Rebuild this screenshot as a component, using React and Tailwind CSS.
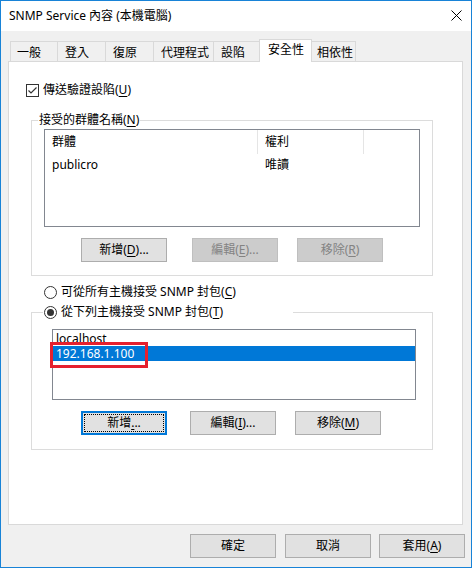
import React from "react";

const U = ({ children }) => (
  <span className="underline decoration-1 underline-offset-[2px]">{children}</span>
);

function Btn({ children, disabled, focused, className = "" }) {
  const base =
    "relative flex items-center justify-center w-[86px] h-[24px] text-[12px] leading-[16px] border shrink-0 ";
  let look = "bg-[#e1e1e1] border-[#adadad] text-black";
  if (disabled) look = "bg-[#cccccc] border-[#bfbfbf] text-[#838383]";
  if (focused) look = "bg-[#e1e1e1] border-2 border-[#0078d7] text-black";
  return (
    <div className={base + look + " " + className}>
      {focused && (
        <span className="absolute inset-[1px] border border-dotted border-black" />
      )}
      <span className="relative">{children}</span>
    </div>
  );
}

function Radio({ checked }) {
  return (
    <div className="w-[13px] h-[13px] rounded-full border border-[#333333] bg-white flex items-center justify-center shrink-0">
      {checked && <div className="w-[7px] h-[7px] rounded-full bg-[#333333]" />}
    </div>
  );
}

function Tab({ label, w, selected, cls = "" }) {
  if (selected) {
    return (
      <div
        className={
          "relative z-10 h-[23px] -mb-px bg-white border-l border-r border-t border-[#d9d9d9] pl-[8px] pt-[2px] leading-[16px] text-[12px] " +
          cls
        }
        style={{ width: w }}
      >
        {label}
      </div>
    );
  }
  return (
    <div
      className={
        "h-[20px] bg-[#f0f0f0] border-t border-[#d9d9d9] pt-[3px] leading-[16px] text-[12px] " +
        cls
      }
      style={{ width: w }}
    >
      {label}
    </div>
  );
}

export default function App() {
  return (
    <div className="w-[472px] h-[568px] border border-[#1883d7] bg-[#f0f0f0] flex flex-col font-['Noto_Sans','Noto_Sans_CJK_TC',sans-serif] text-black text-[12px] leading-[16px] overflow-hidden">
      {/* Title bar */}
      <div className="h-[30px] bg-white flex items-center justify-between pl-[8px] pr-[9px] shrink-0">
        <span className="text-[12px] leading-[16px] -mt-[1px]">SNMP Service 內容 (本機電腦)</span>
        <svg width="11" height="11" viewBox="0 0 11 11" className="-mt-[1px]">
          <path d="M0.5 0.5 L10.5 10.5 M10.5 0.5 L0.5 10.5" stroke="#000" strokeWidth="1" fill="none" />
        </svg>
      </div>

      {/* Body */}
      <div className="flex flex-col pt-[8px]">
        {/* Tabs */}
        <div className="flex items-end ml-[9px] h-[22px]">
          <Tab label="一般" w={47} cls="border-l pl-[6px]" />
          <Tab label="登入" w={48} cls="border-l pl-[7px]" />
          <Tab label="復原" w={48} cls="border-l pl-[7px]" />
          <Tab label="代理程式" w={60} cls="border-l pl-[7px]" />
          <Tab label="設陷" w={46} cls="border-l pl-[7px]" />
          <Tab label="安全性" w={53} selected />
          <Tab label="相依性" w={44} cls="border-r pl-[5px]" />
        </div>

        {/* Panel */}
        <div className="ml-[7px] w-[455px] h-[464px] border border-[#d9d9d9] bg-white flex flex-col">
          {/* Checkbox */}
          <div className="mt-[20px] ml-[17px] h-[16px] flex items-center gap-[4px]">
            <svg width="13" height="13" viewBox="0 0 13 13" className="shrink-0">
              <rect x="0.5" y="0.5" width="12" height="12" fill="#fff" stroke="#333" />
              <path d="M2.5 6.5 L5 9 L10.5 3.5" fill="none" stroke="#333" strokeWidth="1.2" />
            </svg>
            <span>傳送驗證設陷(<U>U</U>)</span>
          </div>

          {/* Group 1 */}
          <fieldset className="mt-[14px] ml-[22px] w-[402px] border border-[#dcdcdc] flex flex-col">
            <legend className="ml-[6px] px-[1px] leading-[16px] text-[12px]">
              接受的群體名稱(<U>N</U>)
            </legend>
            <div className="mt-[1px] ml-[12px] w-[376px] h-[98px] border border-[#828790] bg-white flex flex-col">
              <div className="h-[24px] flex shrink-0">
                <div className="w-[213px] border-r border-[#e5e5e5] pl-[7px] flex items-center">群體</div>
                <div className="w-[106px] border-r border-[#e5e5e5] pl-[7px] flex items-center">權利</div>
              </div>
              <div className="flex pt-[3px]">
                <div className="w-[213px] pl-[7px]">publicro</div>
                <div className="pl-[7px]">唯讀</div>
              </div>
            </div>
            <div className="flex mt-[11px] mb-[13px]">
              <Btn className="ml-[49px]">
                新增(<U>D</U>)...
              </Btn>
              <Btn disabled className="ml-[25px]">
                編輯(<U>E</U>)...
              </Btn>
              <Btn disabled className="ml-[19px]">
                移除(<U>R</U>)
              </Btn>
            </div>
          </fieldset>

          {/* Radio 1 */}
          <div className="mt-[8px] ml-[35px] h-[16px] flex items-center gap-[4px]">
            <Radio />
            <span>可從所有主機接受 SNMP 封包(<U>C</U>)</span>
          </div>

          {/* Group 2 */}
          <fieldset className="mt-[4px] ml-[22px] w-[402px] border border-[#dcdcdc] flex flex-col">
            <legend className="ml-[11px] w-[250px] pl-[1px] h-[16px]">
              <div className="flex items-center gap-[4px] h-[16px]">
                <Radio checked />
                <span>從下列主機接受 SNMP 封包(<U>T</U>)</span>
              </div>
            </legend>
            <div className="relative mt-[9px] ml-[20px] w-[364px] h-[71px] border border-[#828790] bg-white pt-[1px] flex flex-col">
              <div className="h-[15px] leading-[15px] pl-[3px]">localhost</div>
              <div className="h-[15px] leading-[15px] pl-[3px] bg-[#0078d7] text-white">192.168.1.100</div>
              <div className="absolute left-[-3px] top-[12px] w-[98px] h-[26px] border-[3px] border-[#e5202e]" />
            </div>
            <div className="flex mt-[11px] mb-[14px]">
              <Btn focused className="ml-[49px]">
                新增<U>.</U>..
              </Btn>
              <Btn className="ml-[23px]">
                編輯(<U>I</U>)...
              </Btn>
              <Btn className="ml-[19px]">
                移除(<U>M</U>)
              </Btn>
            </div>
          </fieldset>
        </div>

        {/* Bottom buttons */}
        <div className="flex justify-end mt-[9px] pr-[6px]">
          <Btn>確定</Btn>
          <Btn className="ml-[9px]">取消</Btn>
          <Btn className="ml-[8px]">
            套用(<U>A</U>)
          </Btn>
        </div>
      </div>
    </div>
  );
}
